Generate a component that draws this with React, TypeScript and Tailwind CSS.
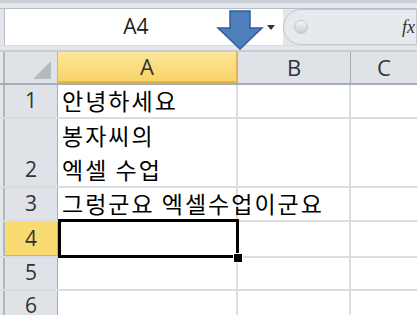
import React from "react";

const kr = { fontFamily: '"Noto Sans CJK KR", "Noto Sans", sans-serif' };
const lat = { fontFamily: '"Open Sans", "Liberation Sans", sans-serif' };

type Row = { n: number; h: string; a?: string[]; sel?: boolean };

const rows: Row[] = [
  { n: 1, h: "h-[34px]", a: ["안녕하세요"] },
  { n: 2, h: "h-[69px]", a: ["봉자씨의", "엑셀 수업"] },
  { n: 3, h: "h-[34px]", a: ["그렁군요 엑셀수업이군요"] },
  { n: 4, h: "h-[36px]", sel: true },
  { n: 5, h: "h-[33px]" },
  { n: 6, h: "h-[33px]" },
];

function Arrow() {
  return (
    <svg width="48" height="41" viewBox="0 0 48 41" className="absolute left-[216px] top-[9px]">
      <path
        d="M14 2 H34 V19 H46 L24 40 L2 19 H14 Z"
        fill="#4d7fbd"
        stroke="#2f5e96"
        strokeWidth="1.5"
      />
    </svg>
  );
}

export default function App() {
  return (
    <div className="relative w-[417px] h-[315px] overflow-hidden bg-white">
      {/* top strip */}
      <div className="h-[9px] bg-[#e3e6ea] border-t-[3px] border-t-[#c9ced5] border-b border-b-[#b8bdc4]" />
      {/* name box + formula bar */}
      <div className="flex h-[36px] bg-[#e3e6ea]">
        <div className="w-[5px] border-r border-[#b8bdc4]" />
        <div className="flex w-[278px] items-center bg-white">
          <div className="flex-1 text-center text-[21px] text-[#222]" style={lat}>
            A4
          </div>
          <div className="mr-[8px] h-0 w-0 border-x-[4px] border-t-[5px] border-x-transparent border-t-[#333]" />
        </div>
        <div className="flex flex-1 items-center rounded-l-[18px] border border-[#c3c7cd] bg-[#e6e9ed] pl-[10px]">
          <div className="h-[14px] w-[14px] rounded-full bg-gradient-to-b from-[#f4f5f7] to-[#c9cdd2] border border-[#c3c7cd]" />
          <div className="ml-auto mr-[1px] text-[18px] italic text-[#333]" style={{ fontFamily: '"Liberation Serif", serif' }}>
            fx
          </div>
        </div>
      </div>
      <div className="h-[7px] bg-[#e3e6ea] border-t border-t-[#d7dbe0] border-b-2 border-b-[#c7ccd2]" />
      {/* column headers */}
      <div className="flex h-[33px] border-b-2 border-[#a7adb4]">
        <div className="w-[5px] bg-[#e3e6ea] border-r-2 border-[#b1b6bd]" />
        <div className="relative w-[53px] bg-[#dfe2e7] border-r border-[#b1b6bd]">
          <div className="absolute right-[6px] bottom-[4px] h-0 w-0 border-l-[18px] border-l-transparent [border-bottom:18px_solid_#b5b9be]" />
        </div>
        <div className="flex w-[180px] items-center justify-center bg-gradient-to-b from-[#fde69a] to-[#f8d566] border-r-2 border-b-2 border-[#e2b44f] text-[22px] text-[#333]" style={lat}>
          A
        </div>
        <div className="flex w-[113px] items-center justify-center bg-[#dfe2e7] border-r border-[#a7adb4] text-[22px] text-[#333]" style={lat}>
          B
        </div>
        <div className="flex flex-1 items-center justify-center bg-[#dfe2e7] text-[22px] text-[#333]" style={lat}>
          C
        </div>
      </div>
      {/* rows */}
      {rows.map((r) => (
        <div key={r.n} className={`flex ${r.h} border-b-2 border-[#dadcdf]`}>
          <div className="w-[5px] bg-[#e3e6ea] border-r-2 border-[#b1b6bd]" />
          <div
            className={`flex w-[53px] items-end justify-center pb-[1px] text-[21px] text-[#333] border-r border-[#a7adb4] ${
              r.sel ? "bg-[#fadb72] border-b border-b-[#e2b44f]" : "bg-[#dfe2e7]"
            }`}
            style={lat}
          >
            {r.n}
          </div>
          <div className="relative w-[180px] border-r-2 border-[#dadcdf]">
            {r.a && (
              <div className="absolute left-[4px] bottom-[0px] whitespace-nowrap text-[23px] leading-[34px] tracking-[2px] text-black" style={kr}>
                {r.a.map((t) => (
                  <div key={t}>{t}</div>
                ))}
              </div>
            )}
            {r.sel && (
              <>
                <div className="absolute left-0 top-[-3px] right-[-3px] bottom-[-2px] border-[3px] border-black" />
                <div className="absolute z-10 right-[-7px] bottom-[-7px] h-[10px] w-[10px] bg-black border border-white" />
              </>
            )}
          </div>
          <div className="w-[113px] border-r-2 border-[#dadcdf]" />
          <div className="flex-1" />
        </div>
      ))}
      <Arrow />
    </div>
  );
}
